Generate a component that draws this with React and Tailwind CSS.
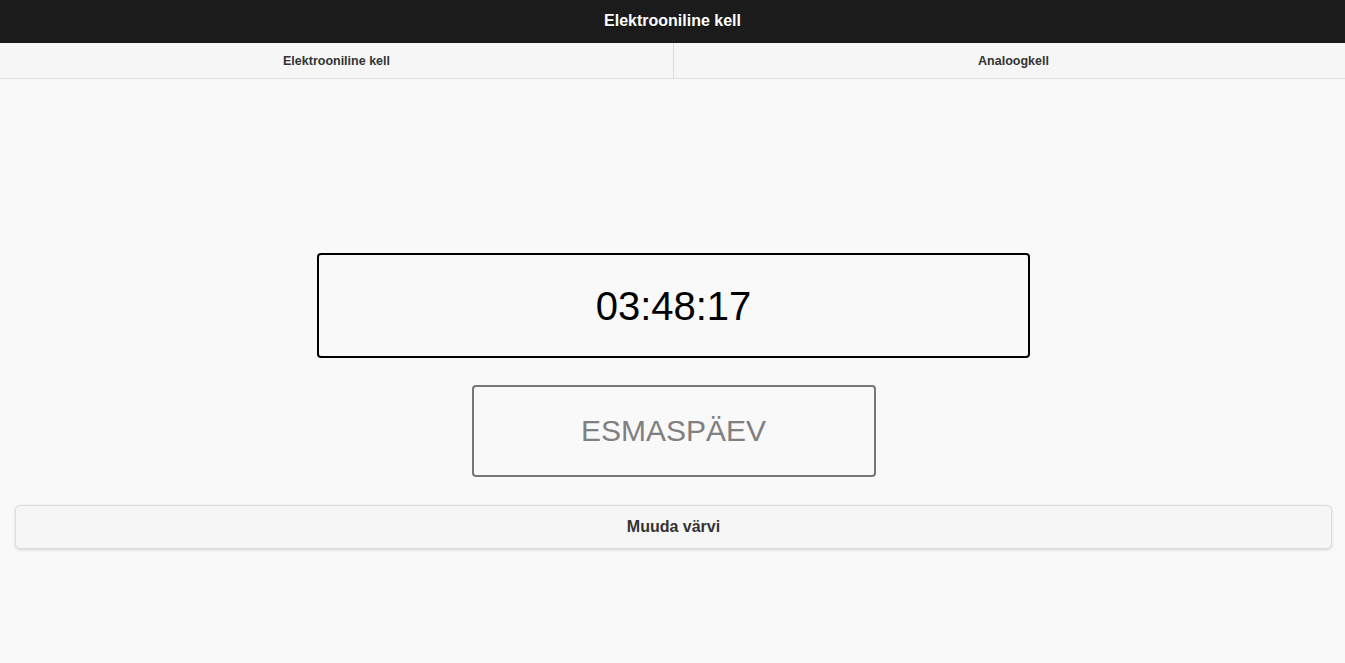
export default function App() {
  return (
    <div className="min-h-[663px] bg-[#f9f9f9] font-['Liberation_Sans',Arial,sans-serif]">
      {/* Header */}
      <div className="h-[43px] bg-[#1b1b1b] flex items-center justify-center border-b border-[#1b1b1b]">
        <h1 className="text-white font-bold text-[16px] [text-shadow:0_1px_0_#111]">Elektrooniline kell</h1>
      </div>

      {/* Navbar */}
      <div className="grid grid-cols-[674px_1fr] h-[36px] bg-[#f6f6f6] border-b border-[#dddddd]">
        <div className="flex items-center justify-center pt-[2px] border-r border-[#dddddd] text-[12.5px] font-bold text-[#333]">
          Elektrooniline kell
        </div>
        <div className="flex items-center justify-center pt-[2px] pl-[8px] text-[12.5px] font-bold text-[#333]">
          Analoogkell
        </div>
      </div>

      {/* Content */}
      <div className="flex flex-col items-center pt-[174px] pl-[2px]">
        <div className="w-[713px] h-[105px] border-2 border-black rounded-[4px] flex items-center justify-center">
          <span className="text-[40px] text-black leading-none">03:48:17</span>
        </div>
        <div className="mt-[27px] w-[404px] h-[92px] border-2 border-[#777] rounded-[4px] flex items-center justify-center">
          <span className="text-[30px] text-[#808080] leading-none">ESMASPÄEV</span>
        </div>
      </div>

      <div className="ml-[15px] mr-[13px] mt-[28px]">
        <button className="w-full h-[44px] bg-[#f6f6f6] border border-[#dddddd] rounded-[5px] shadow-[0_1px_3px_rgba(0,0,0,0.15)] text-[16px] font-bold text-[#333] flex items-center justify-center">
          Muuda värvi
        </button>
      </div>
    </div>
  );
}
